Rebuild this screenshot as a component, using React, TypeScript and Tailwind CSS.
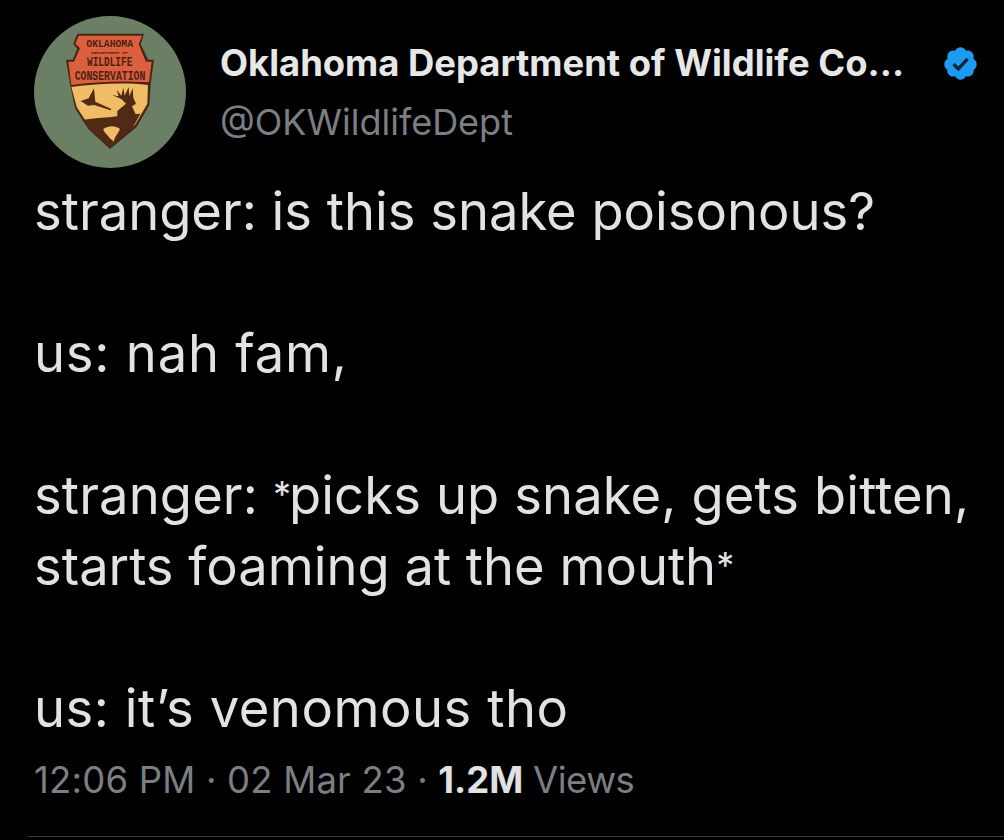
function AgencyLogo() {
  return (
    <svg viewBox="42 33 456 456" className="h-[152px] w-[152px] shrink-0 rounded-full bg-[#6b7f65]">
      {/* shield */}
      <path d="M172 86 L372 86 L362 118 L372 138 L384 164 L402 164 L392 236 L388 300 L350 366 L270 432 L205 372 L165 310 L150 236 L138 164 L158 164 L172 132 L160 116 Z" fill="#4a2414" />
      <path d="M176 92 L366 92 L356 118 L378 170 L395 170 L387 232 C300 226 230 230 154 240 L145 170 L162 170 L180 130 L166 116 Z" fill="#dc5f3e" />
      <path d="M154 246 C230 236 310 232 384 240 L382 296 L345 360 L270 424 L210 368 L170 306 Z" fill="#f0bd66" />
      {/* ground and fish */}
      <path d="M186 345 C230 338 280 338 310 330 C335 325 350 330 362 325 L340 365 L270 428 L212 372 Z" fill="#4f2a14" />
      <path d="M250 372 C265 362 285 360 300 372 C292 390 282 398 282 410 L268 398 C262 388 252 384 250 372 Z" fill="#f0bd66" />
      {/* deer */}
      <path d="M292 318 L318 296 L304 282 L276 270 L296 274 L290 254 L304 272 L310 248 L314 272 L326 246 L328 274 L338 250 L340 278 L348 296 L336 304 L348 330 L340 340 L292 345 Z" fill="#4f2a14" />
      {/* bird */}
      <path d="M182 288 L206 280 L222 250 L226 290 L274 312 L272 316 L222 300 L204 302 Z" fill="#4f2a14" />
      <g fontFamily="'Liberation Mono', monospace" fontWeight="700" fill="#4a1f12" textAnchor="middle">
        <text x="269" y="127" fontSize="30" textLength="140" lengthAdjust="spacingAndGlyphs">OKLAHOMA</text>
        <text x="269" y="146" fontSize="10" textLength="110" lengthAdjust="spacingAndGlyphs">DEPARTMENT OF</text>
        <text x="269" y="182" fontSize="38" textLength="136" lengthAdjust="spacingAndGlyphs">WILDLIFE</text>
        <text x="270" y="224" fontSize="38" textLength="212" lengthAdjust="spacingAndGlyphs">CONSERVATION</text>
      </g>
    </svg>
  );
}

function VerifiedBadge() {
  return (
    <svg viewBox="0 0 24 24" className="h-[37px] w-[37px] shrink-0">
      <path
        d="M22.5 12.5c0-1.58-.875-2.95-2.148-3.6.154-.435.238-.905.238-1.4 0-2.21-1.71-3.998-3.818-3.998-.47 0-.92.084-1.336.25C14.818 2.415 13.51 1.5 12 1.5s-2.816.917-3.437 2.25c-.415-.165-.866-.25-1.336-.25-2.11 0-3.818 1.79-3.818 4 0 .494.083.964.237 1.4-1.272.65-2.147 2.018-2.147 3.6 0 1.495.782 2.798 1.942 3.486-.02.17-.032.34-.032.514 0 2.21 1.708 4 3.818 4 .47 0 .92-.086 1.335-.25.62 1.334 1.926 2.25 3.437 2.25 1.512 0 2.818-.916 3.437-2.25.415.163.865.248 1.336.248 2.11 0 3.818-1.79 3.818-4 0-.174-.012-.344-.033-.513 1.158-.687 1.943-1.99 1.943-3.484z"
        fill="#1d9bf0"
      />
      <path d="M7.5 12.4 L10.6 15.5 L16.6 9" fill="none" stroke="#12233a" strokeWidth="2.2" />
    </svg>
  );
}

function Star() {
  return <span className="align-[7px] text-[36px] leading-none tracking-[-2px]">*</span>;
}

export default function App() {
  return (
    <div className="flex h-[840px] w-[1004px] flex-col overflow-hidden bg-black font-['Inter',sans-serif] text-[#e0e2e3]">
      <div className="flex pl-[34px] pr-[25px] pt-4">
        <AgencyLogo />
        <div className="ml-[34px] flex min-w-0 flex-1 flex-col pt-[24px]">
          <div className="flex h-[46px] items-center justify-between">
            <span className="text-[36.4px] font-bold leading-[46px] text-[#e6e8e8]">Oklahoma Department of Wildlife Co...</span>
            <VerifiedBadge />
          </div>
          <div className="mt-[13px] text-[36px] leading-[46px] text-[#7b7f83]">@OKWildlifeDept</div>
        </div>
      </div>
      <div className="mt-[8px] pl-[34px] text-[52.5px] leading-[71px]">
        <p className="h-[71px]">stranger: is this snake poisonous?</p>
        <p className="mt-[71px] h-[71px] tracking-[0.8px]">us: nah fam,</p>
        <p className="mt-[71px] h-[71px] tracking-[0.13px]">stranger: <Star />picks up snake, gets bitten,</p>
        <p className="h-[71px]">starts foaming at the mouth<Star /></p>
        <p className="mt-[71px] h-[71px] tracking-[0.55px]">us: it’s venomous tho</p>
      </div>
      <div className="mt-[13px] pl-[34px] text-[36.5px] leading-[46px] text-[#7b7f83]">
        <span className="tracking-[0.2px]">12:06 PM · 02 Mar 23 · </span>
        <span className="font-bold text-[#e0e2e3]">1.2M</span>
        <span className="tracking-[-0.5px]"> Views</span>
      </div>
      <div className="ml-[28px] mt-[33px] h-px bg-[#3a3d40]" />
    </div>
  );
}
